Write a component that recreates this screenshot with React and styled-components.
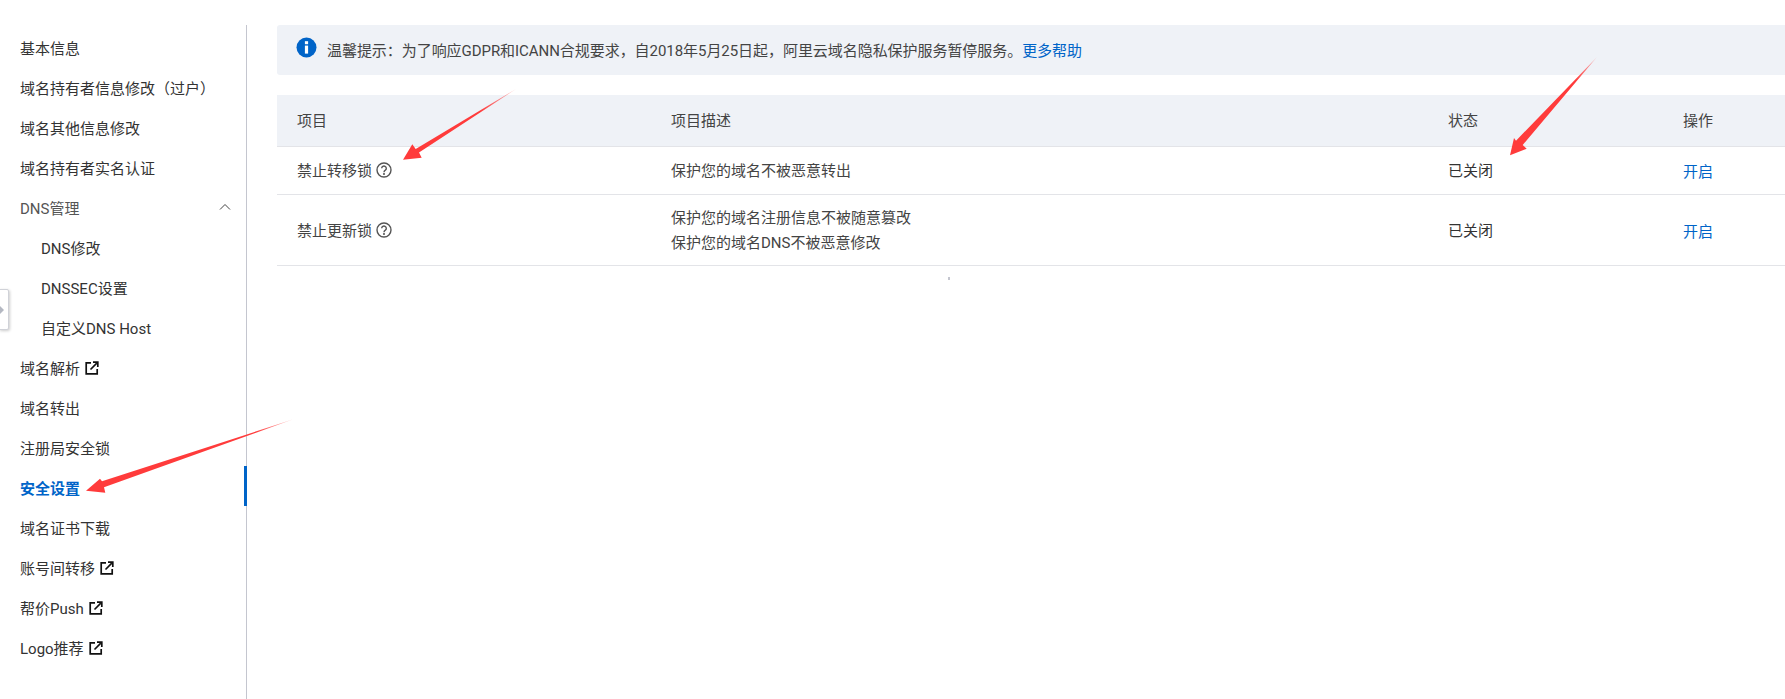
import React from "react";
import styled, { createGlobalStyle } from "styled-components";

const Global = createGlobalStyle`
  html, body { margin: 0; padding: 0; background: #fff; overflow: hidden; }
  body { font-family: Roboto, "Noto Sans CJK SC", sans-serif; font-size: 15px; color: #333; }
  * { box-sizing: border-box; }
`;

const Page = styled.div`
  position: relative;
  width: 1785px;
  height: 699px;
  display: flex;
  padding-top: 25px;
  overflow: hidden;
`;
const Sidebar = styled.nav`
  position: relative;
  width: 247px;
  flex: none;
  padding: 1px 0 0 0;
  border-right: 1px solid #c4c6cf;
`;
const MenuItem = styled.div`
  height: 40px;
  display: flex;
  align-items: center;
  gap: 5px;
  padding-top: 2px;
  padding-left: ${(p) => (p.$sub ? "41px" : "20px")};
  padding-right: 14px;
  white-space: nowrap;
  color: ${(p) => (p.$active ? "#0064c8" : p.$group ? "#555" : "#333")};
  font-weight: ${(p) => (p.$active ? 600 : 400)};
  position: relative;
  ${(p) =>
    p.$active &&
    `&::after{content:"";position:absolute;right:-1px;top:0;width:3px;height:40px;background:#0064c8;}`}
`;
const Chevron = styled.svg`
  margin-left: auto;
  width: 14px;
  height: 14px;
`;
const ExternalSvg = styled.svg`
  width: 14px;
  height: 14px;
  margin-top: 2px;
`;
const Handle = styled.div`
  position: absolute;
  left: -1px;
  top: 289px;
  width: 10px;
  height: 41px;
  background: #fff;
  border: 1px solid #d0d2d8;
  border-radius: 0 2px 2px 0;
  box-shadow: 1px 1px 3px rgba(0, 0, 0, 0.2);
  display: flex;
  align-items: center;
  &::after {
    content: "";
    width: 0;
    height: 0;
    border-left: 4px solid #b4b8c2;
    border-top: 4px solid transparent;
    border-bottom: 4px solid transparent;
  }
`;
const Main = styled.main`
  flex: 1;
  min-width: 0;
  padding-left: 30px;
`;
const Notice = styled.div`
  height: 50px;
  background: #eff2f7;
  border-radius: 3px 0 0 3px;
  display: flex;
  align-items: center;
  padding: 0 0 2px 19px;
  gap: 10px;
  white-space: nowrap;
  color: #444;
  letter-spacing: -0.05px;
`;
const InfoIcon = styled.svg`
  width: 21px;
  height: 21px;
  flex: none;
  margin-top: -4px;
`;
const Link = styled.a`
  color: #0064c8;
  text-decoration: none;
`;
const Row = styled.div`
  display: grid;
  grid-template-columns: 374px 777px 235px 1fr;
  align-items: center;
  height: ${(p) => p.$h}px;
  background: ${(p) => (p.$head ? "#eff2f7" : "#fff")};
  border-bottom: 1px solid #e3e4e8;
  color: #444;
`;
const Table = styled.div`
  margin-top: 20px;
`;
const Cell = styled.div`
  padding-left: 20px;
  padding-bottom: 2px;
  display: flex;
  align-items: center;
  gap: 3px;
  white-space: nowrap;
`;
const DescLines = styled.div`
  padding-left: 20px;
  padding-top: 1px;
  line-height: 25px;
  white-space: nowrap;
`;
const Status = styled(Cell)`
  color: #333;
`;
const ActionCell = styled(Cell)`
  padding-bottom: 0;
`;
const Speck = styled.div`
  position: absolute;
  left: 948px;
  top: 277px;
  width: 2px;
  height: 3px;
  background: #c4c6cf;
`;
const ArrowLayer = styled.svg`
  position: absolute;
  left: 0;
  top: 0;
  width: 1785px;
  height: 699px;
  pointer-events: none;
`;

const ExternalIcon = () => (
  <ExternalSvg viewBox="0 0 14 14" fill="none" stroke="#111" strokeWidth="1.7">
    <path d="M6 1.8H1.2v11h11V8" />
    <path d="M5.5 8.5 11.8 2.2" />
    <path d="M8 1.2h4.8V6" />
  </ExternalSvg>
);

const HelpSvg = styled.svg`
  width: 16px;
  height: 16px;
  margin: 1px 0 0 1px;
`;

const HelpIcon = () => (
  <HelpSvg viewBox="0 0 16 16" fill="none" stroke="#555" strokeWidth="1.4">
    <circle cx="8" cy="8" r="7" />
    <path d="M5.7 6.3a2.3 2.3 0 1 1 3.6 1.9c-.8.5-1.3 1-1.3 2" />
    <circle cx="8" cy="12" r=".4" fill="#555" />
  </HelpSvg>
);

const menu = [
  { t: "基本信息" },
  { t: "域名持有者信息修改（过户）" },
  { t: "域名其他信息修改" },
  { t: "域名持有者实名认证" },
  { t: "DNS管理", group: true },
  { t: "DNS修改", sub: true },
  { t: "DNSSEC设置", sub: true },
  { t: "自定义DNS Host", sub: true },
  { t: "域名解析", ext: true },
  { t: "域名转出" },
  { t: "注册局安全锁" },
  { t: "安全设置", active: true },
  { t: "域名证书下载" },
  { t: "账号间转移", ext: true },
  { t: "帮价Push", ext: true },
  { t: "Logo推荐", ext: true },
];

const rows = [
  { name: "禁止转移锁", desc: ["保护您的域名不被恶意转出"], h: 48 },
  { name: "禁止更新锁", desc: ["保护您的域名注册信息不被随意篡改", "保护您的域名DNS不被恶意修改"], h: 71 },
];

const arrows = [
  { id: "a1", x1: 516, y1: 89, x2: 480, y2: 111, d: "M516 89 415.7 149 412.3 144.3 403 159.7 421.7 157.7 419 152.5Z" },
  { id: "a2", x1: 1597, y1: 57, x2: 1575, y2: 80, d: "M1597 57 1516 140.7 1514 138 1510 155.3 1526.7 148.7 1522.7 145Z" },
  { id: "a3", x1: 293, y1: 419, x2: 255, y2: 431, d: "M293.3 419.3 102 481.3 100 478.7 86 490.7 105.3 492.7 104 487.3Z" },
];

export default function App() {
  return (
    <Page>
      <Global />
      <Sidebar>
        {menu.map((m) => (
          <MenuItem key={m.t} $sub={m.sub} $active={m.active} $group={m.group}>
            {m.t}
            {m.ext && <ExternalIcon />}
            {m.group && (
              <Chevron viewBox="0 0 14 14" fill="none" stroke="#444" strokeWidth="1">
                <path d="M2 9.5 7 4.5 12 9.5" />
              </Chevron>
            )}
          </MenuItem>
        ))}
      </Sidebar>
      <Handle />
      <Main>
        <Notice>
          <InfoIcon viewBox="0 0 21 21">
            <circle cx="10.5" cy="10.5" r="10" fill="#0064c8" />
            <rect x="8.9" y="8.6" width="3.2" height="8" fill="#fff" />
            <rect x="8.9" y="4.2" width="3.2" height="3" fill="#fff" />
          </InfoIcon>
          <span>
            温馨提示：为了响应GDPR和ICANN合规要求，自2018年5月25日起，阿里云域名隐私保护服务暂停服务。<Link>更多帮助</Link>
          </span>
        </Notice>
        <Table>
          <Row $head $h={52}>
            <Cell>项目</Cell>
            <Cell>项目描述</Cell>
            <Cell>状态</Cell>
            <Cell>操作</Cell>
          </Row>
          {rows.map((r) => (
            <Row key={r.name} $h={r.h}>
              <Cell>
                {r.name}
                <HelpIcon />
              </Cell>
              <DescLines>
                {r.desc.map((d) => (
                  <div key={d}>{d}</div>
                ))}
              </DescLines>
              <Status>已关闭</Status>
              <ActionCell>
                <Link>开启</Link>
              </ActionCell>
            </Row>
          ))}
        </Table>
      </Main>
      <Speck />
      <ArrowLayer viewBox="0 0 1785 699">
        <defs>
          {arrows.map((a) => (
            <linearGradient key={a.id} id={a.id} gradientUnits="userSpaceOnUse" x1={a.x1} y1={a.y1} x2={a.x2} y2={a.y2}>
              <stop offset="0" stopColor="#ff3b3b" stopOpacity="0.3" />
              <stop offset="1" stopColor="#ff3b3b" />
            </linearGradient>
          ))}
        </defs>
        {arrows.map((a) => (
          <path key={a.id} fill={`url(#${a.id})`} d={a.d} />
        ))}
      </ArrowLayer>
    </Page>
  );
}
